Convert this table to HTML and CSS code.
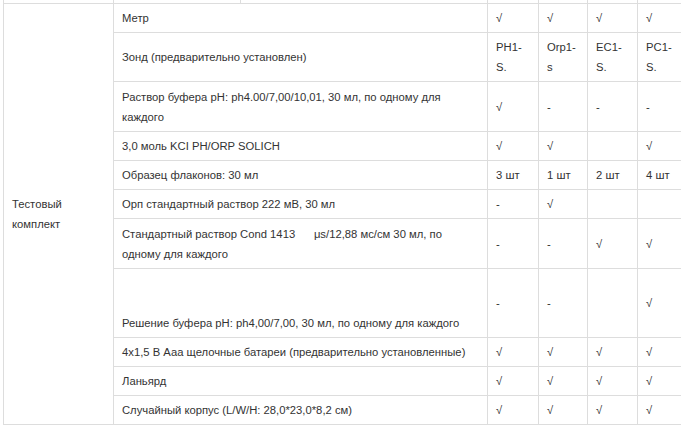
FILE: index.html
```html
<!DOCTYPE html>
<html lang="ru">
<head>
<meta charset="utf-8">
<title>Тестовый комплект</title>
<link rel="stylesheet" href="styles.css">
</head>
<body>
<div class="wrap">
  <div class="strip">
    <span class="s1"></span><span class="s2"></span><span class="s3"></span><span class="s4"></span><span class="s5"></span><span class="s6"></span><span class="s7"></span>
  </div>
  <table class="spec">
    <colgroup>
      <col class="c-group"><col class="c-item"><col class="c-a"><col class="c-b"><col class="c-c"><col class="c-d">
    </colgroup>
    <tbody>
      <tr>
        <td rowspan="11" class="group">Тестовый<br>комплект</td>
        <td>Метр</td><td>√</td><td>√</td><td>√</td><td>√</td>
      </tr>
      <tr class="h2">
        <td>Зонд (предварительно установлен)</td><td>PH1-<br>S.</td><td>Orp1-<br>s</td><td>EC1-<br>S.</td><td>PC1-<br>S.</td>
      </tr>
      <tr class="h2b">
        <td>Раствор буфера pH: ph4.00/7,00/10,01, 30 мл, по одному для<br>каждого</td><td>√</td><td>-</td><td>-</td><td>-</td>
      </tr>
      <tr>
        <td>3,0 моль KCI PH/ORP SOLICH</td><td>√</td><td>√</td><td></td><td>√</td>
      </tr>
      <tr>
        <td>Образец флаконов: 30 мл</td><td>3 шт</td><td>1 шт</td><td>2 шт</td><td>4 шт</td>
      </tr>
      <tr>
        <td>Орп стандартный раствор 222 мВ, 30 мл</td><td>-</td><td>√</td><td></td><td></td>
      </tr>
      <tr class="h2b">
        <td>Стандартный раствор Cond 1413 &nbsp; &nbsp; &nbsp;μs/12,88 мс/см 30 мл, по<br>одному для каждого</td><td>-</td><td>-</td><td>√</td><td>√</td>
      </tr>
      <tr class="h3">
        <td class="bottom">Решение буфера pH: ph4,00/7,00, 30 мл, по одному для каждого</td><td>-</td><td>-</td><td></td><td>√</td>
      </tr>
      <tr>
        <td>4x1,5 В Ааа щелочные батареи (предварительно установленные)</td><td>√</td><td>√</td><td>√</td><td>√</td>
      </tr>
      <tr>
        <td>Ланьярд</td><td>√</td><td>√</td><td>√</td><td>√</td>
      </tr>
      <tr>
        <td>Случайный корпус (L/W/H: 28,0*23,0*8,2 см)</td><td>√</td><td>√</td><td>√</td><td>√</td>
      </tr>
    </tbody>
  </table>
</div>
</body>
</html>
```
FILE: styles.css
```css
html, body {
  margin: 0;
  padding: 0;
  background: #fff;
  overflow: hidden;
}
.wrap {
  padding-left: 3px;
  width: 684px;
  font-family: "Liberation Sans", Arial, sans-serif;
  font-size: 11.25px;
  color: #333;
}
.strip {
  display: flex;
  height: 3px;
}
.strip span {
  border-left: 1px solid #ddd;
  box-sizing: border-box;
  flex: none;
}
.s1 { width: 110px; }
.s2 { width: 127px; }
.s3 { width: 247px; }
.s4 { width: 51px; }
.s5 { width: 49px; }
.s6 { width: 50px; }
.s7 { width: 50px; }
.spec {
  border-collapse: collapse;
  table-layout: fixed;
  width: 685px;
}
.c-group { width: 110px; }
.c-item { width: 374px; }
.c-a { width: 51px; }
.c-b { width: 49px; }
.c-c { width: 50px; }
.c-d { width: 51px; }
.spec td {
  border: 1px solid #ddd;
  padding: 4px 8px;
  line-height: 20px;
  height: 20px;
  vertical-align: middle;
  white-space: nowrap;
  overflow: hidden;
}
.spec tr.h2 td { height: 40px; }
.spec tr.h2b td { height: 41px; }
.spec tr.h3 td { height: 60px; }
.spec td.bottom { vertical-align: bottom; }
.spec td.group { height: auto; }
```
